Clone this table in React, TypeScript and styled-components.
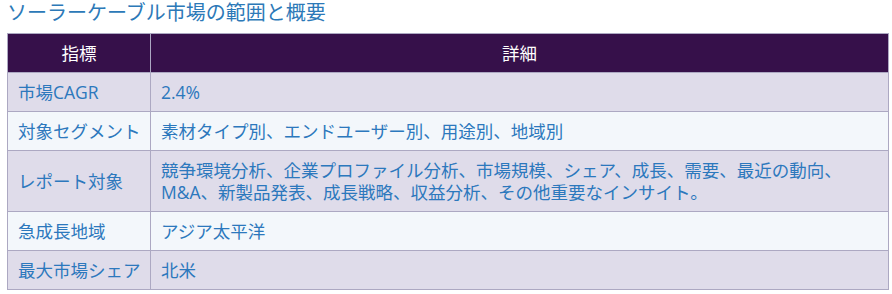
import React from 'react';
import styled, { createGlobalStyle } from 'styled-components';

const GlobalStyle = createGlobalStyle`
    html, body {
        margin: 0;
        padding: 0;
        background: #ffffff;
    }
    body {
        font-family: 'Open Sans', 'Noto Sans CJK JP', sans-serif;
    }
`;

const Page = styled.div`
    padding: 0 3px 0 7px;
`;

const Title = styled.h2`
    margin: 0 0 8px 0;
    font-size: 20px;
    line-height: 25px;
    font-weight: 400;
    color: #2c79b8;
`;

const Table = styled.table`
    width: 882px;
    table-layout: fixed;
    border-collapse: collapse;
    border: 1px solid #aca8c2;
    font-size: 17.5px;
    line-height: 22px;
`;

const LabelCol = styled.col`
    width: 143px;
`;

const HeadCell = styled.th`
    height: 39px;
    padding: 0 10px;
    background: #36104a;
    color: #ffffff;
    font-weight: 400;
    text-align: center;
    border: 1px solid #aca8c2;
    box-sizing: border-box;
`;

const Row = styled.tr<{ $shade: boolean }>`
    background: ${(p) => (p.$shade ? '#dfdcea' : '#f3f7fb')};
`;

const Cell = styled.td<{ $label?: boolean }>`
    padding: 8px 9px 8px 10px;
    color: #2c78bd;
    border: 1px solid #aca8c2;
    text-align: left;
    vertical-align: middle;
    white-space: ${(p) => (p.$label ? 'nowrap' : 'normal')};
`;

const rows: [string, string][] = [
    ['市場CAGR', '2.4%'],
    ['対象セグメント', '素材タイプ別、エンドユーザー別、用途別、地域別'],
    [
        'レポート対象',
        '競争環境分析、企業プロファイル分析、市場規模、シェア、成長、需要、最近の動向、M&A、新製品発表、成長戦略、収益分析、その他重要なインサイト。',
    ],
    ['急成長地域', 'アジア太平洋'],
    ['最大市場シェア', '北米'],
];

const App = () => {
    return (
        <Page>
            <GlobalStyle />
            <Title>ソーラーケーブル市場の範囲と概要</Title>
            <Table>
                <colgroup>
                    <LabelCol />
                    <col />
                </colgroup>
                <thead>
                    <tr>
                        <HeadCell>指標</HeadCell>
                        <HeadCell>詳細</HeadCell>
                    </tr>
                </thead>
                <tbody>
                    {rows.map(([label, value], i) => (
                        <Row key={label} $shade={i % 2 === 0}>
                            <Cell $label>{label}</Cell>
                            <Cell>{value}</Cell>
                        </Row>
                    ))}
                </tbody>
            </Table>
        </Page>
    );
};

export default App;
